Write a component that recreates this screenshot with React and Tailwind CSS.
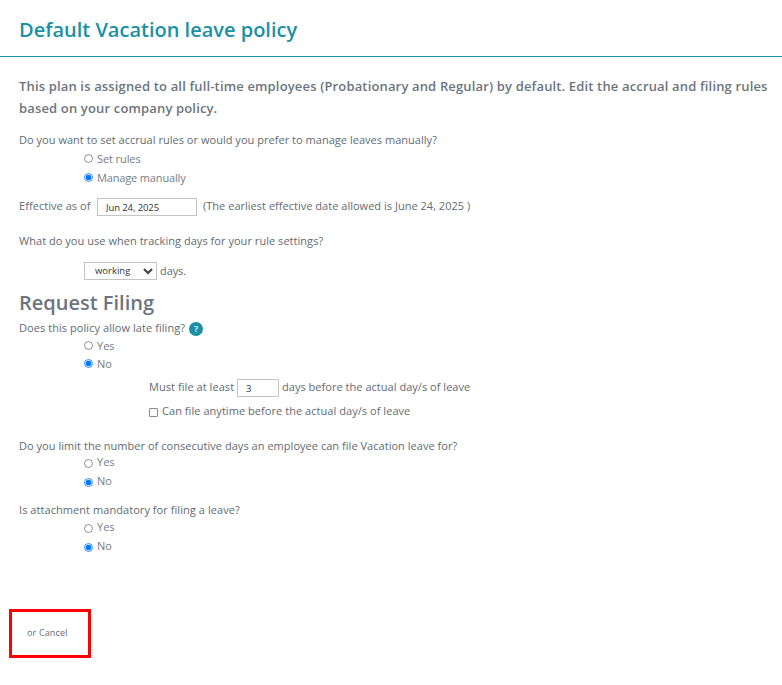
import { useState } from 'react'

function Radio({ name, label, checked, onChange, dotClass = '', labelClass = '' }) {
  return (
    <label className="flex h-4 items-center text-[#757d84]">
      <input
        type="radio"
        name={name}
        checked={checked}
        onChange={onChange}
        className="sr-only"
      />
      <svg width="9" height="9" viewBox="0 0 9 9" className={`mr-1 shrink-0 ${dotClass}`}>
        <circle cx="4.5" cy="4.5" r="4" fill="#fff" stroke={checked ? '#0075ff' : '#767676'} strokeWidth="0.8" />
        {checked && <circle cx="4.5" cy="4.5" r="2.8" fill="#0075ff" />}
      </svg>
      <span className={labelClass}>{label}</span>
    </label>
  )
}

function App() {
  const [mode, setMode] = useState('manual')
  const [lateFiling, setLateFiling] = useState(false)
  const [limitDays, setLimitDays] = useState(false)
  const [attachment, setAttachment] = useState(false)

  return (
    <div className="h-[685px] w-[782px] overflow-hidden bg-white font-['Open_Sans',sans-serif] text-[11px] leading-4 text-[#626b73]">
      <header className="h-[57px] border-b border-[#1a91a5] pl-[19px] pt-[16px]">
        <h1 className="whitespace-nowrap text-[20px] font-semibold leading-7 text-[#1a91a5]">
          Default Vacation leave policy
        </h1>
      </header>

      <main className="pl-[19px]">
        <p className="mt-[18px] whitespace-nowrap text-[13px] font-semibold leading-[22px] tracking-[0.153px] text-[#6c757d]">
          This plan is assigned to all full-time employees (Probationary and Regular) by default. Edit the accrual and filing rules
          <br />
          based on your company policy.
        </p>

        <p className="mt-[13px] font-medium tracking-[0.03px]">
          Do you want to set accrual rules or would you prefer to manage leaves manually?
        </p>
        <div className="mt-[3px] flex flex-col gap-[3px] pl-[65px]">
          <Radio
            name="mode"
            label="Set rules"
            checked={mode === 'rules'}
            onChange={() => setMode('rules')}
            dotClass="mb-[2px]"
            labelClass="tracking-[-0.1px]"
          />
          <Radio
            name="mode"
            label="Manage manually"
            checked={mode === 'manual'}
            onChange={() => setMode('manual')}
            dotClass="mb-[2px]"
            labelClass="tracking-[-0.15px]"
          />
        </div>

        <div className="mt-[11px] flex h-[18px] items-center font-medium">
          <span className="w-[78px] tracking-[0.05px]">Effective as of</span>
          <input
            type="text"
            defaultValue="Jun 24, 2025"
            className="mt-px h-[18px] w-[100px] border border-[#c4c4c4] px-2 pt-px text-[9.5px] font-normal tracking-[-0.1px] text-[#333]"
          />
          <span className="ml-[6px] tracking-[0.02px]">(The earliest effective date allowed is June 24, 2025 )</span>
        </div>

        <p className="mt-[18px] font-medium tracking-[0.04px]">What do you use when tracking days for your rule settings?</p>
        <div className="mt-[13px] flex h-[18px] items-center pl-[65px]">
          <button className="flex h-[18px] w-[73px] items-center justify-between border border-[#c4c4c4] pl-[10px] pr-[3px] text-[9.5px] text-[#333]">
            working
            <svg width="10" height="8" viewBox="0 0 10 8" fill="none" stroke="#444" strokeWidth="2.2">
              <path d="M1 2 L5 6 L9 2" />
            </svg>
          </button>
          <span className="ml-[3px] tracking-[-0.1px]">days.</span>
        </div>

        <h2 className="mt-[9px] text-[20px] font-semibold leading-7 text-[#6c757d]">Request Filing</h2>

        <div className="mt-[3px] flex h-4 items-center font-medium tracking-[0.06px]">
          Does this policy allow late filing?
          <span className="ml-1 mt-[2px] flex size-[14px] items-center justify-center rounded-full bg-[#1a91a5] text-[9px] font-semibold text-white">
            ?
          </span>
        </div>
        <div className="mt-[2px] flex flex-col gap-[2px] pl-[65px]">
          <Radio name="late" label="Yes" checked={lateFiling} onChange={() => setLateFiling(true)} dotClass="mb-[2px]" />
          <Radio name="late" label="No" checked={!lateFiling} onChange={() => setLateFiling(false)} dotClass="mb-[2px]" />
        </div>

        <div className="mt-[6px] flex h-[18px] items-center pl-[130px] font-medium">
          <span className="w-[88px] tracking-[0.06px]">Must file at least</span>
          <input
            type="text"
            defaultValue="3"
            className="mt-px h-[18px] w-[42px] border border-[#c4c4c4] px-2 pt-px text-[9.5px] font-normal text-[#333]"
          />
          <span className="ml-[3px] tracking-[0.03px]">days before the actual day/s of leave</span>
        </div>
        <label className="mt-[7px] flex h-4 items-center pl-[130px] font-medium tracking-[0.05px]">
          <span className="mr-[4px] mt-[2px] size-[9px] rounded-[1px] border border-[#8a8a8a]" />
          Can file anytime before the actual day/s of leave
        </label>

        <p className="mt-[19px] font-medium tracking-[0.035px]">
          Do you limit the number of consecutive days an employee can file Vacation leave for?
        </p>
        <div className="flex flex-col gap-[3px] pl-[65px]">
          <Radio name="limit" label="Yes" checked={limitDays} onChange={() => setLimitDays(true)} dotClass="mt-[3px]" />
          <Radio name="limit" label="No" checked={!limitDays} onChange={() => setLimitDays(false)} dotClass="mt-[3px]" />
        </div>

        <p className="mt-[13px] font-medium tracking-[0.06px]">Is attachment mandatory for filing a leave?</p>
        <div className="mt-px flex flex-col gap-[3px] pl-[65px]">
          <Radio name="attachment" label="Yes" checked={attachment} onChange={() => setAttachment(true)} dotClass="mt-[3px]" />
          <Radio name="attachment" label="No" checked={!attachment} onChange={() => setAttachment(false)} dotClass="mt-[3px]" />
        </div>
      </main>

      <div className="ml-[9px] mt-[55px] flex h-[49px] w-[82px] items-center border-[3px] border-[#f00] pb-[2px] pl-[15px] text-[9px] tracking-[0.15px]">
        or Cancel
      </div>
    </div>
  )
}

export default App
